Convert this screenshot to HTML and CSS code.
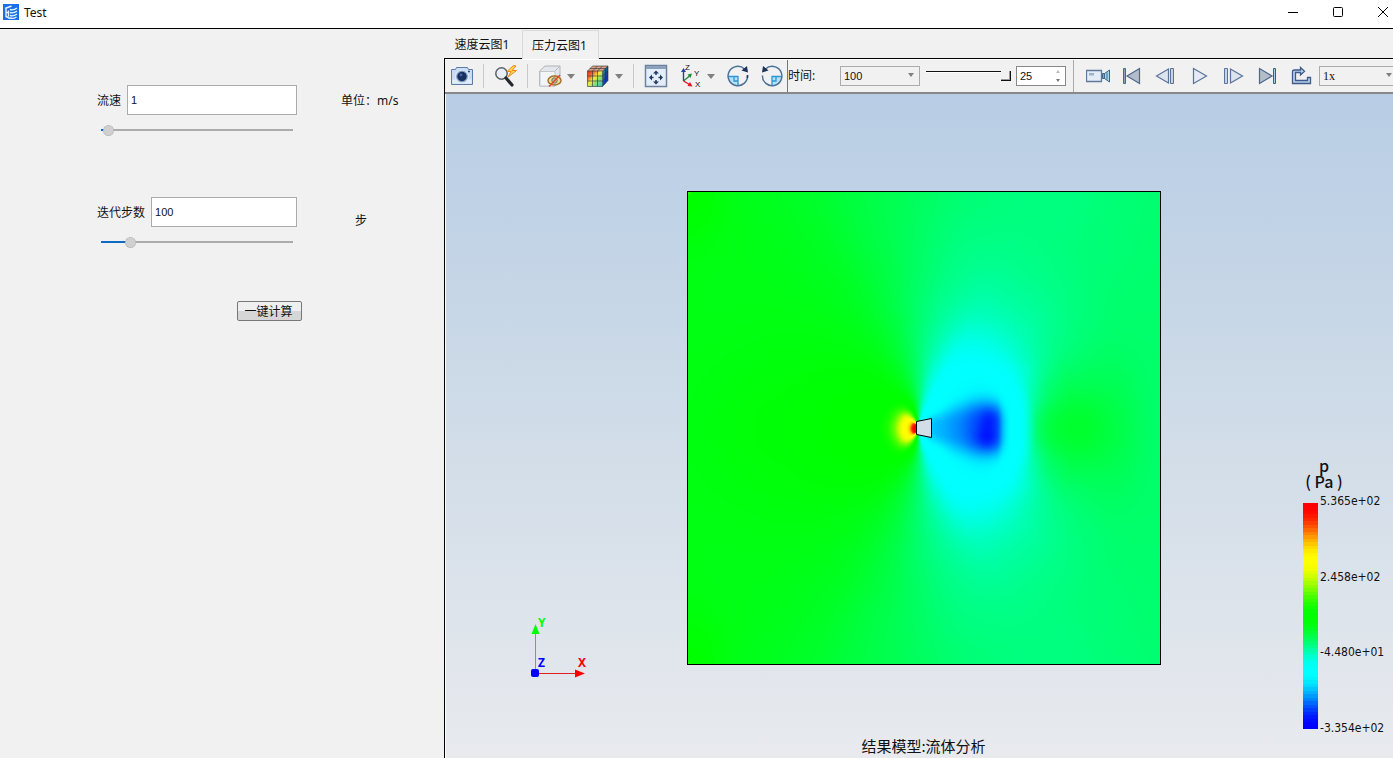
FILE: index.html
```html
<!DOCTYPE html>
<html lang="zh-CN">
<head>
<meta charset="utf-8">
<title>Test</title>
<link rel="stylesheet" href="styles.css">
</head>
<body>
<div class="window">
  <header class="titlebar">
    <svg class="app-icon" viewBox="0 0 16 16" width="16" height="16" aria-hidden="true">
      <rect width="16" height="16" fill="#1a6fe8"/>
      <g fill="none" stroke="#e8f2ff" stroke-width="1.4">
        <path d="M2 4.500 8.500 2M3 5v7.500l4 2M5.500 6.500v6M3 8.500h3"/>
        <path d="M7 5.500c3 1 5 0 7-1.500M7 8.500c3 1 5 0 7-1.500M7 11.500c3 1 5 0 7-1.500M7 14c3 1 5 0 6.500-1"/>
      </g>
    </svg>
    <h1 class="title">Test</h1>
    <div class="window-controls">
      <button type="button" aria-label="最小化"><svg width="12" height="12" viewBox="0 0 12 12"><path d="M1 6.500h10"/></svg></button>
      <button type="button" aria-label="最大化"><svg width="12" height="12" viewBox="0 0 12 12"><rect x="1.500" y="1.500" width="9" height="9" rx="1"/></svg></button>
      <button type="button" aria-label="关闭"><svg width="12" height="12" viewBox="0 0 12 12"><path d="M1 1l10 10M11 1 1 11"/></svg></button>
    </div>
  </header>

  <main class="content">
    <form class="params">
      <div class="param">
        <div class="field">
          <div class="field-row">
            <label for="speed">流速</label>
            <input class="text" id="speed" type="text" value="1">
          </div>
          <input class="slider" type="range" min="0" max="120" value="1" aria-label="流速滑块" style="--fill: 6px">
        </div>
        <span class="unit">单位：m/s</span>
      </div>
      <div class="param">
        <div class="field">
          <div class="field-row">
            <label for="steps">迭代步数</label>
            <input class="text" id="steps" type="text" value="100">
          </div>
          <input class="slider" type="range" min="0" max="740" value="100" aria-label="迭代步数滑块" style="--fill: 30px">
        </div>
        <span class="unit unit-low">步</span>
      </div>
      <button class="run" type="button">一键计算</button>
    </form>

    <section class="viewer">
      <div class="tabs" role="tablist">
        <button class="tab" type="button" role="tab" aria-selected="false">速度云图1</button>
        <button class="tab active" type="button" role="tab" aria-selected="true">压力云图1</button>
      </div>

      <div class="panel">
        <div class="toolbar">
          <div class="group">
            <button class="tool" type="button" aria-label="截图">
              <svg width="24" height="24" viewBox="0 0 24 24"><path d="M1.500 5.500h4l1-2h11l1 2h4v15h-21z" fill="#c9dcf2" stroke="#5b7ba8"/><path d="M2.500 15.500h19v4h-19z" fill="#e4eefa"/><circle cx="12" cy="12.500" r="6.500" fill="#8aa6cc" stroke="#e9f2fc"/><circle cx="12" cy="12.500" r="4.700" fill="#17305f"/><circle cx="11" cy="11" r="1.400" fill="#4767a0"/><path d="M18 7.500h2" stroke="#33517f" stroke-width="1.500"/></svg>
            </button>
            <span class="sep"></span>
            <button class="tool" type="button" aria-label="快速查看">
              <svg width="24" height="24" viewBox="0 0 24 24"><circle cx="7.500" cy="9.500" r="5.700" fill="#e9eef4" stroke="#5a6068" stroke-width="1.500"/><path d="m12 14 6 7" stroke="#24272c" stroke-width="3.200" stroke-linecap="round"/><path d="m19.500 1.500-6.500 6h4l-3 5.500 8.500-6.500h-4.500l4-4.500z" fill="#ffd84d" stroke="#ef8420"/></svg>
            </button>
            <span class="sep"></span>
            <button class="tool" type="button" aria-label="隐藏">
              <svg width="24" height="24" viewBox="0 0 24 24"><path d="m1.500 7 5.500-5h15v13l-5 7H1.500z" fill="#e3e7eb" stroke="#aeb4bb"/><path d="M2 7.500h15V22H2z" fill="#f3f5f7" stroke="#c2c7cd"/><path d="m17 7 5-5" stroke="#b5bbc2"/><ellipse cx="16.500" cy="16.500" rx="6.500" ry="4.500" fill="#f1dc8c" stroke="#a5742c" stroke-width="1.500"/><circle cx="16.500" cy="16.500" r="2.700" fill="#c9bf88" stroke="#66767f"/><path d="M11 22.500 22 11" stroke="#e2462c" stroke-width="1.500"/></svg>
            </button>
            <button class="more" type="button" aria-label="更多隐藏选项"></button>
            <button class="tool" type="button" aria-label="显示模式">
              <svg width="24" height="24" viewBox="0 0 24 24">
                <defs>
                  <linearGradient id="cubeFront" x1="0" y1="0" x2="1" y2="1"><stop offset="0" stop-color="#e8231b"/><stop offset=".25" stop-color="#f26a32"/><stop offset=".45" stop-color="#f3ec3e"/><stop offset=".65" stop-color="#8ede6c"/><stop offset="1" stop-color="#27b8e8"/></linearGradient>
                  <linearGradient id="cubeSide" x1="0" y1="0" x2="1" y2="1"><stop offset="0" stop-color="#26b06b"/><stop offset=".6" stop-color="#1638b0"/></linearGradient>
                </defs>
                <path d="m1.500 7 5-5h15.500l-5.500 5z" fill="#dba184"/><path d="M16.500 7 22 2v14.500l-5.500 6z" fill="url(#cubeSide)"/><path d="M1.500 7h15v15.500h-15z" fill="url(#cubeFront)"/><path d="m1.500 7 5-5H22v14.500l-5.500 6h-15zM1.500 7h15v15.500M16.500 7 22 2M6.500 7v15.500M11.500 7v15.500M1.500 12h15l5.500-5M1.500 17h15l5.500-5M6.500 7l5-5M11.500 7l5-5M4 4.500h15.500v15" fill="none" stroke="#263236" stroke-width=".6"/>
              </svg>
            </button>
            <button class="more" type="button" aria-label="更多显示模式"></button>
            <span class="sep"></span>
            <button class="tool" type="button" aria-label="适应窗口">
              <svg width="24" height="24" viewBox="0 0 24 24"><path d="M1.500 1.500h21v21h-21z" fill="#e4eefa" stroke="#6d829f" stroke-width="1.500"/><path d="M2 2h20v3H2z" fill="#8ba0bd"/><path d="M12 6.500l3 3H9zM12 20.500l3-3H9zM5 13.500l3-3v6zM19 13.500l-3-3v6z" fill="#23395f"/><path d="M12 9v2M12 16v2M7.500 13.500h2M14.500 13.500h2" stroke="#23395f" stroke-width="1.500"/></svg>
            </button>
            <button class="tool" type="button" aria-label="视图方向">
              <svg width="24" height="24" viewBox="0 0 24 24"><path d="M5.500 17V7" stroke="#2a3fa5" stroke-width="1.400"/><path d="M5.500 4l2.500 4H3z" fill="#2a3fa5"/><path d="m5.500 17 6-5" stroke="#1a8f3a" stroke-width="1.400"/><path d="m14 9.500-1.500 4.500-3-3.500z" fill="#1a8f3a"/><path d="m5.500 17 6 3.500" stroke="#e12" stroke-width="1.400"/><path d="m14.500 22.500-5-.5 2.500-4z" fill="#e12"/><g class="icon-letters"><text x="7" y="6">Z</text><text x="16" y="12">Y</text><text x="17" y="23">X</text></g></svg>
            </button>
            <button class="more" type="button" aria-label="更多视图方向"></button>
            <button class="tool" type="button" aria-label="顺时针旋转">
              <svg width="24" height="24" viewBox="0 0 24 24"><path d="M2.500 12.500H12V22a9.500 9.500 0 0 1-9.500-9.500z" fill="#b7e0fa"/><path d="M2.500 12.500H12V22M8 13v4h4" fill="none" stroke="#2b98d8" stroke-width="1.300"/><path d="M21.500 11.500a9.700 9.700 0 1 1-3-6.500" fill="none" stroke="#4c7297" stroke-width="1.500"/><path d="M21.300 14a9.700 9.700 0 0 0 .2-3" stroke="#203a66" stroke-width="1.500" fill="none"/><path d="m15.500 6.500 5.500-4.500 1 6.500z" fill="#1c3159"/></svg>
            </button>
            <button class="tool" type="button" aria-label="逆时针旋转">
              <svg width="24" height="24" viewBox="0 0 24 24"><path d="M21.500 12.500H12V22a9.500 9.500 0 0 0 9.500-9.500z" fill="#b7e0fa"/><path d="M21.500 12.500H12V22M16 13v4h-4" fill="none" stroke="#2b98d8" stroke-width="1.300"/><path d="M2.500 11.500a9.700 9.700 0 1 0 3-6.500" fill="none" stroke="#4c7297" stroke-width="1.500"/><path d="M8.500 6.500 3 2 2 8.500z" fill="#1c3159"/></svg>
            </button>
          </div>

          <div class="group time">
            <label for="time">时间:</label>
            <span class="select-box time-select"><select id="time"><option>100</option></select></span>
            <input class="frame-slider" type="range" min="0" max="25" value="25" aria-label="帧">
            <span class="spin">
              <input type="text" inputmode="numeric" value="25" aria-label="帧序号">
              <button class="spin-up" type="button" aria-label="增加"></button>
              <button class="spin-down" type="button" aria-label="减少"></button>
            </span>
          </div>

          <div class="group playback">
            <button class="tool" type="button" aria-label="录制">
              <svg width="24" height="24" viewBox="0 0 24 24"><path d="M.5 6.500h15v11H.5z" fill="#e3ebf4" stroke="#62799b" stroke-width="1.300"/><path d="M3 9h5v2.500H3z" fill="#9db1c9"/><path d="m16.500 9.500 2 0v5h-2z" fill="#7fa4c4" stroke="#3f6488"/><path d="M18.500 9.500 23.500 6v12l-5-3.500z" fill="#a8d4ef" stroke="#3f6488"/><path d="M21 8.500v7" stroke="#376f9e"/></svg>
            </button>
            <button class="tool" type="button" aria-label="首帧">
              <svg width="24" height="24" viewBox="0 0 24 24"><path d="M3.500 4.500h2v15h-2z" fill="#8d9fb9" stroke="#4f678c"/><path d="M19.500 4.500v15L7 12z" fill="#b3bdca" stroke="#4f678c" stroke-width="1.200"/></svg>
            </button>
            <button class="tool" type="button" aria-label="上一帧">
              <svg width="24" height="24" viewBox="0 0 24 24"><path d="M14.500 5v14L2.500 12z" fill="#dce4ee" stroke="#5a7397" stroke-width="1.200"/><path d="M16.500 4.500h3v15h-3z" fill="#c4d3e6" stroke="#5a7397"/></svg>
            </button>
            <button class="tool" type="button" aria-label="播放">
              <svg width="24" height="24" viewBox="0 0 24 24"><path d="M5.500 4.500v15L18.500 12z" fill="#e5ebf2" stroke="#5a7397" stroke-width="1.200"/></svg>
            </button>
            <button class="tool" type="button" aria-label="下一帧">
              <svg width="24" height="24" viewBox="0 0 24 24"><path d="M8.500 5v14l12-7z" fill="#dce4ee" stroke="#5a7397" stroke-width="1.200"/><path d="M2.500 4.500h3v15h-3z" fill="#c4d3e6" stroke="#5a7397"/></svg>
            </button>
            <button class="tool" type="button" aria-label="末帧">
              <svg width="24" height="24" viewBox="0 0 24 24"><path d="M3.500 4.500v15L16 12z" fill="#b3bdca" stroke="#4f678c" stroke-width="1.200"/><path d="M17.500 4.500h2v15h-2z" fill="#a9cdea" stroke="#385d8a"/></svg>
            </button>
            <button class="tool" type="button" aria-label="循环">
              <svg width="24" height="24" viewBox="0 0 24 24"><path d="M2.500 19.500V8q0-2 2-2h6V3.500l4 3.800-4 3.700V8.500H5.500v8h12v-3h3v6z" fill="#b9d2ec" stroke="#3d5a88" stroke-width="1.300"/></svg>
            </button>
            <span class="select-box rate-select"><select aria-label="播放速度"><option>1x</option></select></span>
          </div>
        </div>

        <div class="scene">
          <canvas class="plot" id="plot" width="472" height="472" role="img" aria-label="压力云图"></canvas>

          <svg class="triad" width="64" height="68" viewBox="0 0 64 68" role="img" aria-label="坐标轴">
            <path d="M6.500 57V14" stroke="#1fe01f"/><path d="m6.500 8 4 10h-8z" fill="#0f0"/>
            <path d="M7 57.500h42" stroke="#e02020"/><path d="m56 57.500-10-4v8z" fill="#f00"/>
            <rect x="2" y="53" width="8" height="8" rx="2" fill="#00f"/>
            <text x="9" y="11" fill="#0f0">Y</text><text x="9" y="51" fill="#00f">Z</text><text x="49" y="51" fill="#f00">X</text>
          </svg>

          <div class="legend">
            <div class="legend-title"><span>p</span><span>( Pa )</span></div>
            <div class="legend-scale">
              <canvas id="colorbar" width="15" height="226"></canvas>
              <ol class="legend-labels">
                <li>5.365e+02</li><li>2.458e+02</li><li>-4.480e+01</li><li>-3.354e+02</li>
              </ol>
            </div>
          </div>

          <p class="caption">结果模型:流体分析</p>
        </div>
      </div>
    </section>
  </main>
</div>
<script src="plot.js"></script>
</body>
</html>
```
FILE: styles.css
```css
* {
  box-sizing: border-box;
}

body {
  margin: 0;
  background: #f1f1f1;
  color: #111;
  font: 12px/16px "Noto Sans", "Noto Sans CJK SC", sans-serif;
}

button,
input,
select {
  margin: 0;
  color: inherit;
  font: inherit;
}

.window {
  display: flex;
  flex-direction: column;
  height: 100vh;
  overflow: hidden;
}

/* Title bar */
.titlebar {
  display: flex;
  flex: none;
  align-items: center;
  height: 29px;
  padding: 0 0 4px 3px;
  border-bottom: 1px solid #000;
  background: #fff;
}

.title {
  flex: 1;
  margin: 0 0 0 5px;
  padding-top: 2px;
  font-size: 12px;
  font-weight: 400;
}

.window-controls {
  display: flex;
  gap: 25px;
}

.window-controls button {
  display: grid;
  place-items: center;
  width: 20px;
  height: 20px;
  padding: 0;
  border: 0;
  background: none;
}

.window-controls svg {
  fill: none;
  stroke: #000;
}

/* Layout */
.content {
  display: grid;
  flex: 1;
  grid-template-columns: 444px minmax(0, 1fr);
  min-height: 0;
}

/* Parameters */
.params {
  display: flex;
  flex-direction: column;
  gap: 59px;
  padding: 56px 0 0 97px;
}

.param {
  display: grid;
  grid-template-columns: 200px 1fr;
  column-gap: 44px;
}

.field {
  display: flex;
  flex-direction: column;
  gap: 7px;
}

.field-row {
  display: flex;
  align-items: center;
  gap: 6px;
}

.field-row label {
  padding-top: 2px;
}

.text {
  flex: 1;
  min-width: 0;
  height: 30px;
  padding: 0 3px;
  border: 1px solid #ababab;
  background: #fff;
  font: 11px/16px "Liberation Sans", "Noto Sans CJK SC", sans-serif;
}

.slider {
  height: 16px;
  margin: 0 4px;
  appearance: none;
  background: none;
}

.slider::-webkit-slider-runnable-track {
  height: 2px;
  background: linear-gradient(90deg, #0c6ac0 var(--fill), #ababab var(--fill));
}

.slider::-webkit-slider-thumb {
  width: 11px;
  height: 11px;
  margin-top: -4px;
  appearance: none;
  border: 1px dotted #aaa;
  border-radius: 50%;
  background: #d0d0d0;
}

.unit {
  padding-top: 8px;
}

.unit-low {
  padding: 16px 0 0 14px;
}

.run {
  width: 65px;
  height: 20px;
  margin: -8px 0 0 140px;
  padding: 1px 2px 0 0;
  border: 1px solid #777;
  border-radius: 2px;
  background: linear-gradient(#efefef 50%, #d6d6d6 50%);
  line-height: 17px;
}

/* Tabs */
.viewer {
  display: flex;
  flex-direction: column;
  min-width: 0;
  min-height: 0;
}

.tabs {
  display: flex;
  flex: none;
  height: 30px;
  padding-top: 1px;
}

.tab {
  width: 78px;
  padding: 2px 2px 0 0;
  border: 0;
  border-bottom: 1px solid #000;
  background: none;
}

.tab.active {
  width: 77px;
  border: 1px solid #d9d9d9;
  border-bottom: 0;
}

.tabs::after {
  flex: 1;
  border-bottom: 1px solid #000;
  content: "";
}

.panel {
  display: flex;
  flex: 1;
  flex-direction: column;
  min-height: 0;
  border-left: 1px solid #000;
}

/* Toolbar */
.toolbar {
  display: flex;
  flex: none;
  height: 35px;
  overflow: hidden;
  border-top: 1px solid #fff;
  border-bottom: 2px solid #888;
}

.group {
  display: flex;
  flex: none;
  align-items: center;
}

.tool {
  display: grid;
  flex: none;
  place-items: center;
  width: 34px;
  height: 30px;
  padding: 0;
  border: 0;
  background: none;
}

.icon-letters {
  fill: #111;
  font: 8px "Liberation Sans", sans-serif;
}

.sep {
  width: 10px;
  height: 24px;
  background: linear-gradient(#c8c8c8, #c8c8c8) left 4px top / 1px 100% no-repeat;
}

.more {
  width: 14px;
  height: 24px;
  padding: 0;
  border: 0;
  background: none;
}

.more::before,
.select-box::after {
  display: block;
  width: 0;
  border: 4px solid transparent;
  border-top: 5px solid #808080;
  border-bottom: 0;
  content: "";
}

.time {
  width: 287px;
  margin-left: -2px;
  border: solid #777;
  border-width: 0 1px;
  border-right-color: #aaa;
}

.time label {
  width: 52px;
}

.select-box {
  position: relative;
  height: 20px;
}

.select-box select {
  width: 100%;
  height: 100%;
  padding: 0 3px;
  appearance: none;
  border: 1px solid #ababab;
  border-radius: 0;
  background: #f1f1f1;
  font: 11px/16px "Liberation Sans", "Noto Sans CJK SC", sans-serif;
}

.select-box::after {
  position: absolute;
  top: 7px;
  right: 6px;
  border-width: 4px 3px 0;
  pointer-events: none;
}

.time-select {
  width: 80px;
}

.frame-slider {
  width: 85px;
  height: 12px;
  margin: 0 5px 0 6px;
  appearance: none;
  background: none;
}

.frame-slider::-webkit-slider-runnable-track {
  height: 10px;
  background: linear-gradient(#111 1px, #fff 1px, #fff 2px, transparent 2px);
}

.frame-slider::-webkit-slider-thumb {
  width: 10px;
  height: 10px;
  appearance: none;
  border: 1px solid #111;
  border-width: 0 1px 1px 0;
  background: #f1f1f1;
  box-shadow: inset -1px -1px #999;
}

.spin {
  display: grid;
  grid-template: 1fr 1fr / 1fr 14px;
  width: 50px;
  height: 20px;
  border: 1px solid #888;
  background: #fff;
}

.spin input {
  grid-row: 1 / 3;
  min-width: 0;
  padding: 0 3px;
  border: 0;
  background: none;
  font: 11px/16px "Liberation Sans", "Noto Sans CJK SC", sans-serif;
}

.spin button {
  display: grid;
  place-items: center;
  padding: 0;
  border: 0;
  background: none;
}

.spin button::before {
  border: 2px solid transparent;
  content: "";
}

.spin .spin-up::before {
  border-top: 0;
  border-bottom: 3px solid #bbb;
}

.spin .spin-down::before {
  border-top: 3px solid #777;
  border-bottom: 0;
}

.playback {
  margin-left: 7px;
}

.rate-select {
  width: 80px;
}

.rate-select::after {
  right: 7px;
}

.rate-select select {
  font: 12px/16px "Liberation Serif", "Noto Sans CJK SC", serif;
}

/* Scene */
.scene {
  position: relative;
  display: grid;
  flex: 1;
  place-items: center;
  min-height: 0;
  padding: 4px 0 0 8px;
  border-left: 1px solid #fff;
  background: linear-gradient(#b8cde5, #d0dce8 50%, #e8eaee);
}

.plot {
  box-sizing: content-box;
  border: 1px solid #000;
}

.triad {
  position: absolute;
  bottom: 74px;
  left: 83px;
}

.triad text {
  font: 700 12px "Noto Sans", sans-serif;
}

.legend {
  position: absolute;
  right: 5px;
  bottom: 24px;
  width: 85px;
}

.legend-title {
  display: flex;
  flex-direction: column;
  width: 42px;
  padding-bottom: 9px;
  text-align: center;
  font: 500 16px/16px "Noto Sans CJK SC", "Noto Sans", sans-serif;
}

.legend-scale {
  display: flex;
  gap: 2px;
}

.legend-scale canvas {
  margin: 5px 0;
}

.legend-labels {
  display: flex;
  flex-direction: column;
  justify-content: space-between;
  margin: -5px 0 -2px;
  padding: 0;
  list-style: none;
  font-family: "DejaVu Sans Condensed", "Noto Sans", sans-serif;
}

.caption {
  position: absolute;
  right: 0;
  bottom: 2px;
  left: 8px;
  margin: 0;
  text-align: center;
  font: 15px/20px "Noto Sans CJK SC", sans-serif;
}
```
FILE: plot.js
```js
// Colour scale: 0 blue, 1 cyan, 2 green, 3 yellow, 4 red.
const STOPS = [[0, 0, 255], [0, 255, 255], [0, 255, 0], [255, 255, 0], [255, 0, 0]];

function smooth(t) {
  t = Math.max(0, Math.min(1, t));
  return t * t * (3 - 2 * t);
}

function color(v) {
  v = Math.max(0, Math.min(3.9999, v));
  const i = Math.floor(v);
  const s = smooth(v - i);
  return STOPS[i].map((c, k) => c + (STOPS[i + 1][k] - c) * s);
}

// Monotone cubic interpolation through (xs, ys).
function curve(xs, ys) {
  const n = xs.length;
  const d = [];
  for (let i = 0; i < n - 1; i++) d.push((ys[i + 1] - ys[i]) / (xs[i + 1] - xs[i]));
  const m = ys.map((_, i) => {
    if (i === 0 || i === n - 1) return 0;
    return d[i - 1] * d[i] <= 0 ? 0 : 2 * d[i - 1] * d[i] / (d[i - 1] + d[i]);
  });
  return x => {
    if (x <= xs[0]) return ys[0];
    if (x >= xs[n - 1]) return ys[n - 1];
    let i = 0;
    while (x > xs[i + 1]) i++;
    const h = xs[i + 1] - xs[i];
    const t = (x - xs[i]) / h;
    const t2 = t * t;
    const t3 = t2 * t;
    return (2 * t3 - 3 * t2 + 1) * ys[i] + (t3 - 2 * t2 + t) * h * m[i] +
      (3 * t2 - 2 * t3) * ys[i + 1] + (t3 - t2) * h * m[i + 1];
  };
}

// Pressure around the body, by angle (degrees from downstream) and radius.
const RADII = [0, 20, 40, 60, 80, 100, 110, 120, 140, 160, 200, 240, 340];
const ANGLES = [0, 15, 30, 45, 60, 75, 90, 105, 120, 135, 150, 180];
const PRESSURE = [
  [0.95, 0.95, 0.95, 0.96, 0.97, 1.03, 1.28, 1.56, 1.70, 1.73, 1.65, 1.56, 1.55],
  [0.94, 0.94, 0.94, 0.95, 0.96, 1.02, 1.19, 1.40, 1.56, 1.61, 1.60, 1.56, 1.55],
  [0.93, 0.93, 0.93, 0.94, 0.96, 1.05, 1.15, 1.26, 1.41, 1.48, 1.53, 1.55, 1.55],
  [0.97, 0.97, 0.97, 0.97, 1.00, 1.12, 1.19, 1.26, 1.36, 1.42, 1.49, 1.52, 1.54],
  [1.00, 1.00, 1.02, 1.04, 1.10, 1.20, 1.25, 1.30, 1.37, 1.42, 1.48, 1.50, 1.50],
  [1.20, 1.22, 1.24, 1.28, 1.33, 1.38, 1.40, 1.42, 1.45, 1.47, 1.50, 1.52, 1.52],
  [1.60, 1.58, 1.55, 1.54, 1.54, 1.54, 1.55, 1.55, 1.56, 1.57, 1.58, 1.59, 1.59],
  [1.90, 1.84, 1.76, 1.72, 1.70, 1.69, 1.69, 1.68, 1.68, 1.68, 1.67, 1.67, 1.67],
  [2.00, 1.96, 1.90, 1.85, 1.82, 1.80, 1.79, 1.79, 1.78, 1.78, 1.77, 1.77, 1.77],
  [2.00, 2.00, 1.97, 1.93, 1.90, 1.87, 1.86, 1.85, 1.84, 1.83, 1.82, 1.82, 1.84],
  [2.00, 2.00, 1.99, 1.97, 1.94, 1.91, 1.90, 1.89, 1.87, 1.86, 1.84, 1.83, 1.84],
  [2.02, 2.02, 2.02, 2.00, 1.98, 1.95, 1.94, 1.93, 1.91, 1.90, 1.87, 1.85, 1.85]
];
const profiles = PRESSURE.map(row => {
  const f = curve(RADII, row);
  return Array.from({ length: 721 }, (_, i) => f(i / 2));
});

const stagnation = curve([0, 3, 6, 8, 11, 16, 20, 25, 32, 42], [2.1, 2, 1.65, 1.3, 1.08, 0.84, 0.6, 0.35, 0.14, 0]);
const wakeDepth = curve([8, 14, 28, 42, 56, 70, 78, 86, 95], [0.16, 0.26, 0.34, 0.44, 0.57, 0.65, 0.58, 0.24, 0]);
const wakeHalf = curve([10, 40, 62, 76, 92], [13, 25, 30, 29, 24]);

function pressure(dx, dy) {
  const ay = Math.abs(dy);
  const fan = ay * ay / (ay + 3);
  const r = Math.hypot(dx, ay);
  const angle = Math.atan2(fan, dx) * 180 / Math.PI;
  const ri = Math.min(719, r * 2);
  const r0 = Math.floor(ri);
  let v = curve(ANGLES, profiles.map(p => p[r0] + (p[r0 + 1] - p[r0]) * (ri - r0)))(angle);

  v += stagnation(Math.hypot(dx + 1, dy)) * smooth((angle - 92) / 62);
  if (dx > 8 && dx < 95) {
    v -= wakeDepth(dx) * Math.exp(-Math.pow(ay / wakeHalf(dx), 3));
    v -= 0.09 * Math.exp(-((dx - 71) ** 2 + (dy + 9) ** 2) / 110);
    v -= 0.14 * Math.exp(-((dx - 68) ** 2 + (dy - 9) ** 2) / 120);
  }
  const cx = dx + 230;
  const cy = 236 - ay;
  v += 0.14 * Math.exp(-(cx * cx / 900 + cy * cy / 2200)) + 0.3 * Math.exp(-(cx * cx + cy * cy) / 8);
  return v;
}

const plot = document.getElementById("plot");
const ctx = plot.getContext("2d");
const image = ctx.createImageData(plot.width, plot.height);
for (let y = 0, k = 0; y < plot.height; y++) {
  for (let x = 0; x < plot.width; x++, k += 4) {
    const c = color(pressure(x - 230, y - 236));
    image.data[k] = c[0];
    image.data[k + 1] = c[1];
    image.data[k + 2] = c[2];
    image.data[k + 3] = 255;
  }
}
ctx.putImageData(image, 0, 0);

// Solid body in the flow.
ctx.beginPath();
ctx.moveTo(228.5, 229.5);
ctx.lineTo(243.5, 226.5);
ctx.lineTo(243.5, 245.5);
ctx.lineTo(228.5, 242.5);
ctx.closePath();
ctx.fillStyle = "#d2dde8";
ctx.fill();
ctx.strokeStyle = "#000";
ctx.stroke();

// Banded colour bar.
const bar = document.getElementById("colorbar");
const barCtx = bar.getContext("2d");
const BANDS = 64;
for (let y = 0; y < bar.height; y++) {
  const band = Math.floor(y / bar.height * BANDS);
  barCtx.fillStyle = `rgb(${color(4 - 4 * band / (BANDS - 1)).map(Math.round).join(",")})`;
  barCtx.fillRect(0, y, bar.width, 1);
}
```
